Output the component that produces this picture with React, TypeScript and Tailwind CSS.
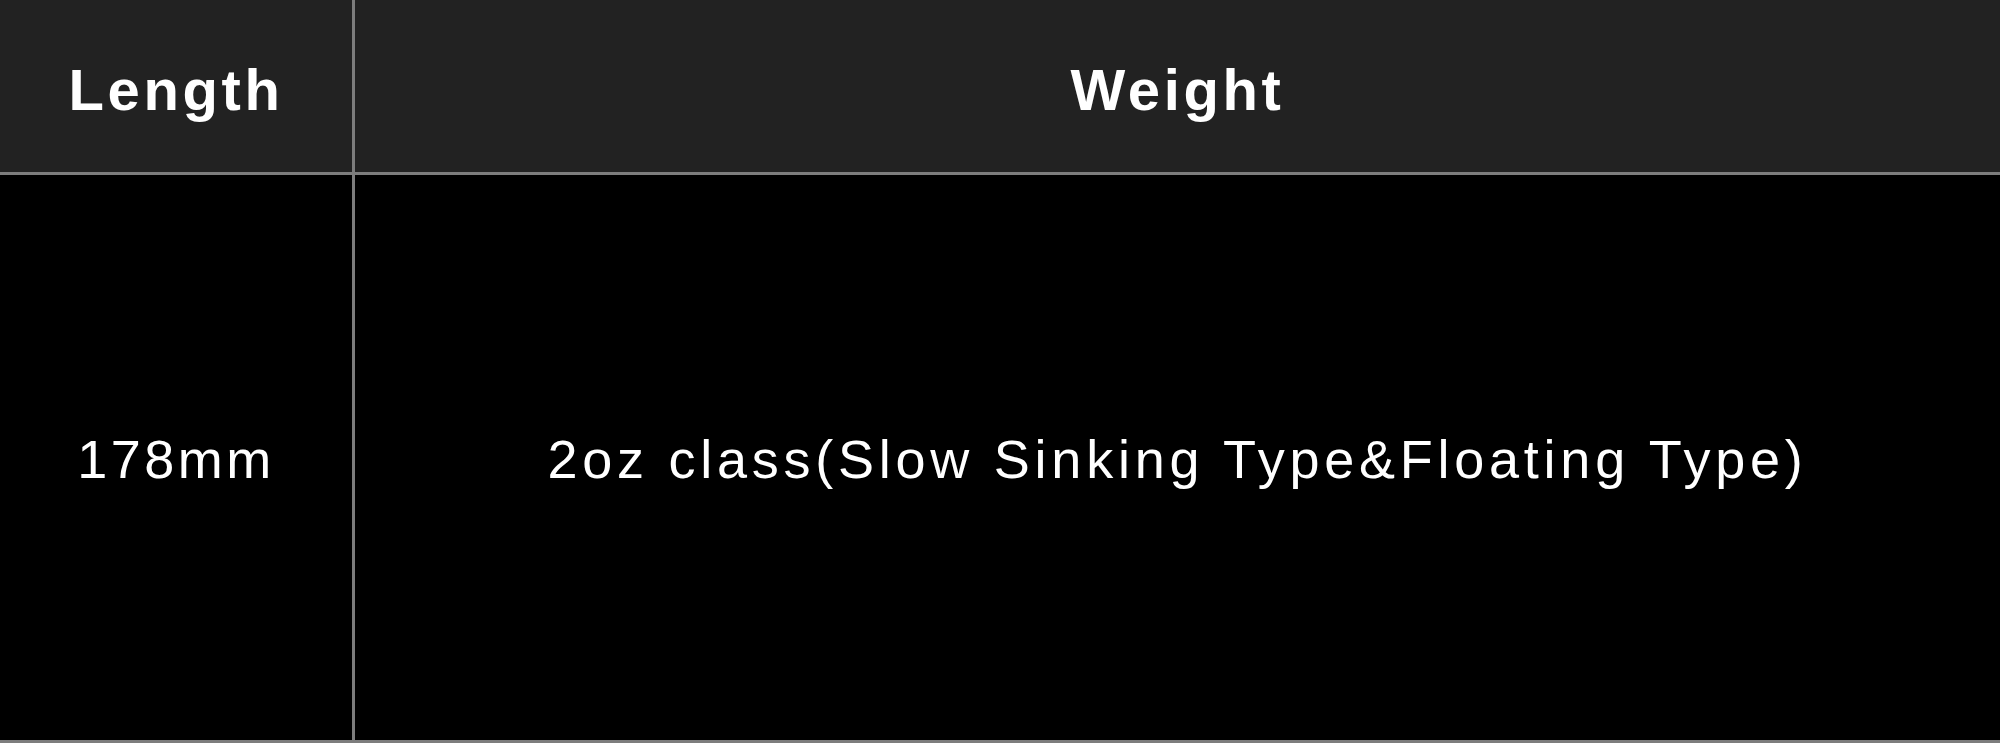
import React from 'react';

const specs = [{ length: '178mm', weight: '2oz class(Slow Sinking Type&Floating Type)' }];

const App = () => {
  return (
    <div className="w-[2000px] h-[743px] bg-black font-['Liberation_Sans',Arial,sans-serif] text-white">
      <div className="grid grid-cols-[355px_1fr]">
        {/* Header */}
        <div className="h-[175px] pt-[8px] bg-[#222222] border-b-[3px] border-r-[3px] border-[#7d7d7d] flex items-center justify-center">
          <span className="text-[58px] font-bold tracking-[3.6px] leading-none">Length</span>
        </div>
        <div className="h-[175px] pt-[8px] bg-[#222222] border-b-[3px] border-[#7d7d7d] flex items-center justify-center">
          <span className="text-[58px] font-bold tracking-[3.6px] leading-none">Weight</span>
        </div>

        {/* Rows */}
        {specs.map((row) => (
          <React.Fragment key={row.length}>
            <div className="h-[568px] pt-[2px] bg-black border-b-[3px] border-r-[3px] border-[#7d7d7d] flex items-center justify-center">
              <span className="text-[54px] tracking-[3.5px] leading-none">{row.length}</span>
            </div>
            <div className="h-[568px] pt-[2px] bg-black border-b-[3px] border-[#7d7d7d] flex items-center justify-center">
              <span className="text-[54px] tracking-[4.75px] leading-none">{row.weight}</span>
            </div>
          </React.Fragment>
        ))}
      </div>
    </div>
  );
};

export default App;
